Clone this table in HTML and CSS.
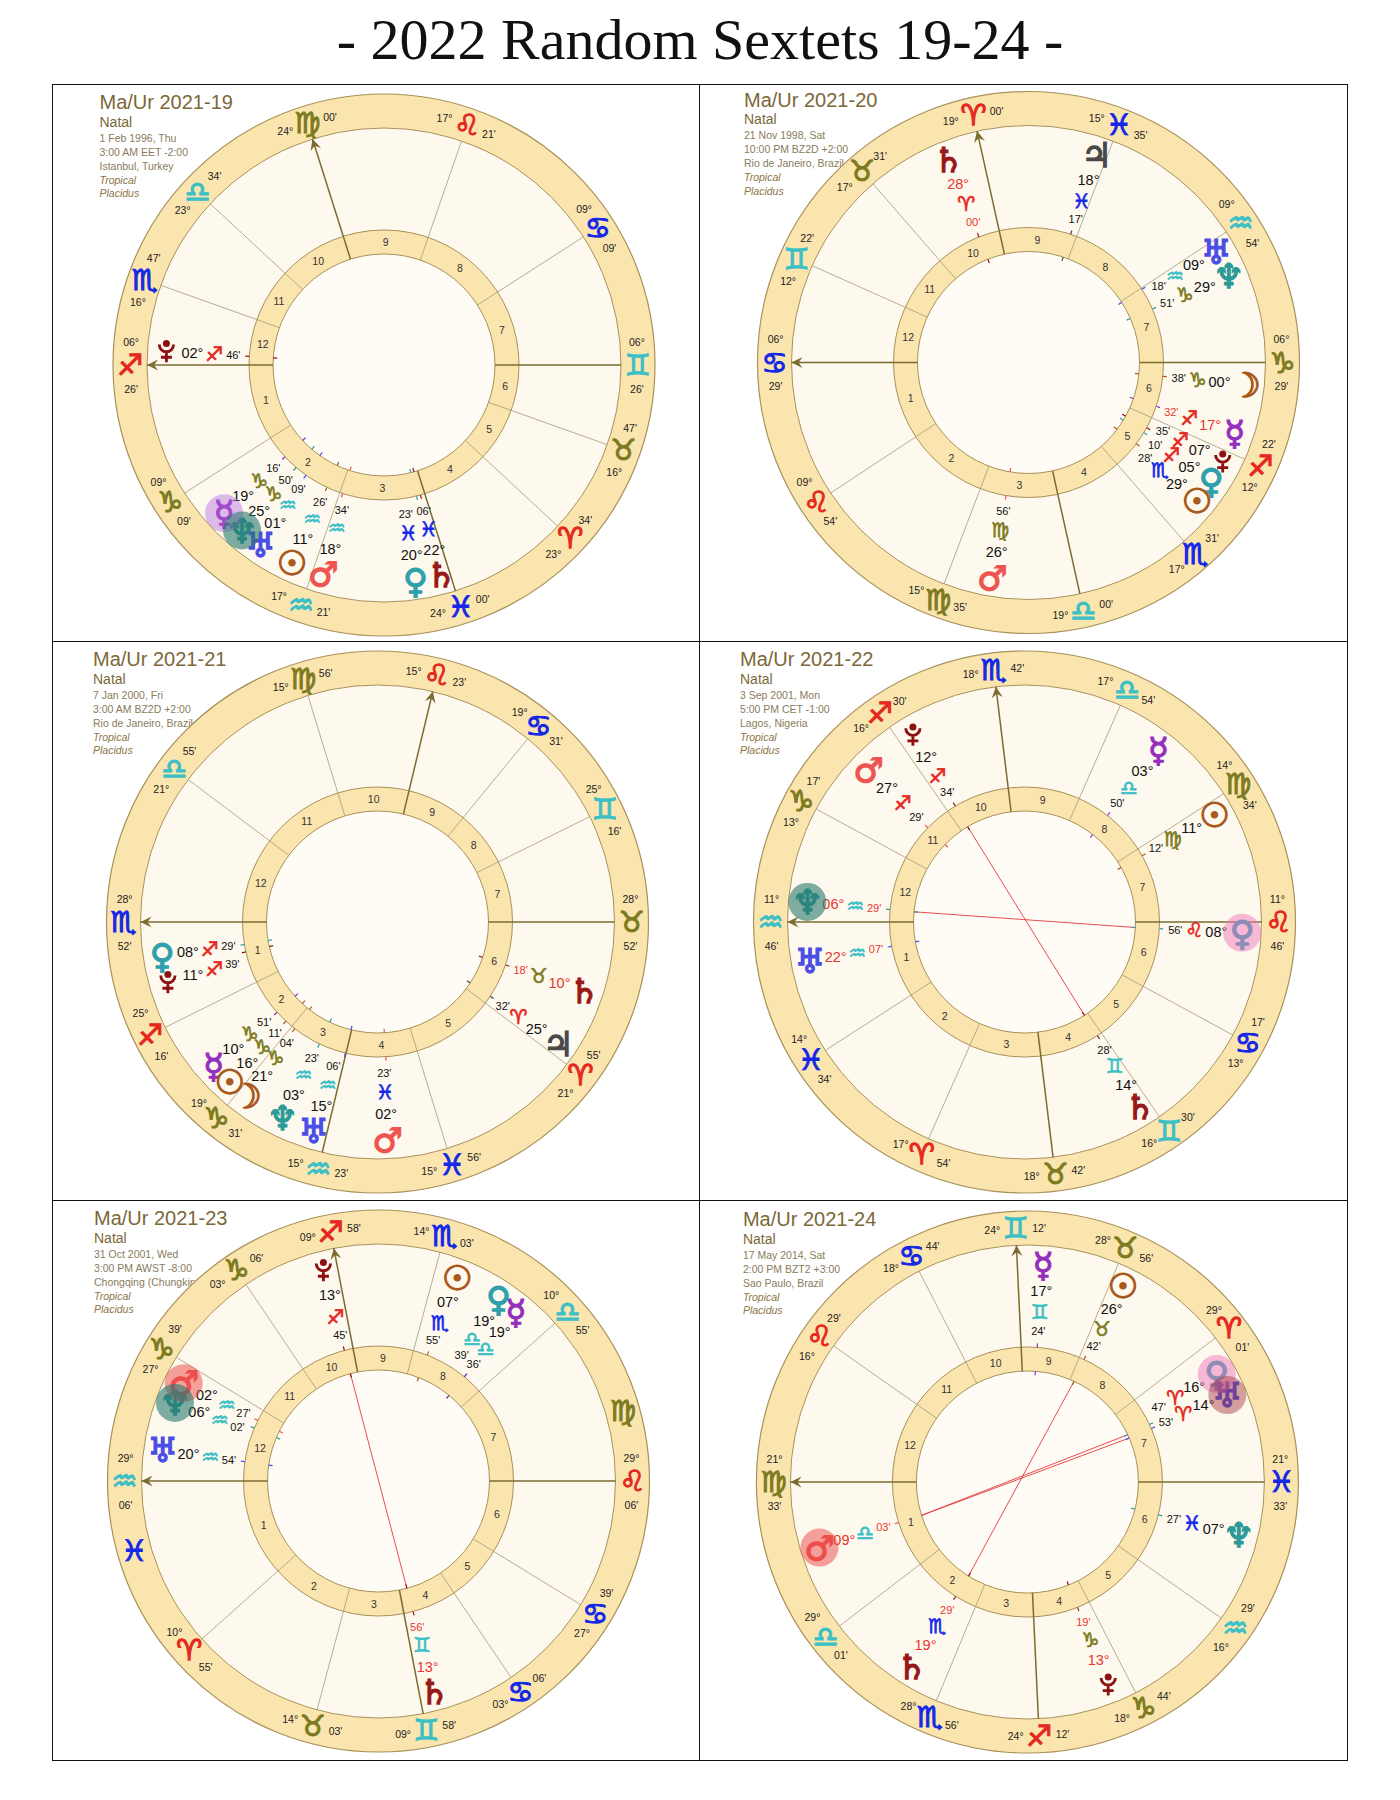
FILE: index.html
```html
<!DOCTYPE html>
<html lang="en">
<head>
<meta charset="utf-8">
<title>2022 Random Sextets 19-24</title>
<link rel="stylesheet" href="styles.css">
</head>
<body>
<h1 class="title">- 2022 Random Sextets 19-24 -</h1>
<main class="sheet">
  <section class="cell" data-chart="19"><svg class="wheel" xmlns="http://www.w3.org/2000/svg"></svg></section>
  <section class="cell" data-chart="20"><svg class="wheel" xmlns="http://www.w3.org/2000/svg"></svg></section>
  <section class="cell" data-chart="21"><svg class="wheel" xmlns="http://www.w3.org/2000/svg"></svg></section>
  <section class="cell" data-chart="22"><svg class="wheel" xmlns="http://www.w3.org/2000/svg"></svg></section>
  <section class="cell" data-chart="23"><svg class="wheel" xmlns="http://www.w3.org/2000/svg"></svg></section>
  <section class="cell" data-chart="24"><svg class="wheel" xmlns="http://www.w3.org/2000/svg"></svg></section>
</main>
<script src="script.js"></script>
</body>
</html>
```

FILE: styles.css
```css
html, body { margin: 0; padding: 0; background: #fff; }
body { width: 1400px; font-family: "Liberation Sans", Arial, sans-serif; }

.title {
  margin: 0;
  height: 84px;
  line-height: 80px;
  text-align: center;
  font-family: "Liberation Serif", "DejaVu Serif", serif;
  font-weight: normal;
  font-size: 58px;
  color: #111;
}

.sheet {
  box-sizing: border-box;
  margin-left: 52px;
  width: 1296px;
  height: 1677px;
  border: 1.5px solid #111;
  display: grid;
  grid-template-columns: 647px 1fr;
  grid-template-rows: 556.5px 559px 1fr;
}
.cell { position: relative; overflow: hidden; }
.cell:nth-child(odd) { border-right: 1px solid #111; }
.cell:nth-child(-n+4) { border-bottom: 1px solid #111; }
.wheel { display: block; width: 100%; height: 100%; }

/* header */
.hd-title { font-size: 20px; fill: #7b6838; }
.hd-natal { font-size: 14px; fill: #7b6838; }
.hd-line { font-size: 10.5px; fill: #8a7b5c; }
.hd-ital { font-size: 10.5px; font-style: italic; fill: #8c7446; }

/* wheel body */
.ring { fill: #fbe5ae; stroke: #a8915a; stroke-width: 1.2; }
.field { fill: #fef9ee; stroke: #a8915a; stroke-width: 1; }
.hring { fill: #fbe5ae; stroke: #a8915a; stroke-width: 1; }
.core { fill: #fffcf5; stroke: #a8915a; stroke-width: 1; }
.cusp { stroke: #a39a7a; stroke-width: 0.8; }
.axis { stroke: #7c6c30; stroke-width: 1.5; }
.arrow { fill: #7c6c30; stroke: none; }
.aspect { stroke: #e5393b; stroke-width: 0.9; }
.tk { stroke-width: 1.2; }

.c { text-anchor: middle; dominant-baseline: central; }
.hnum { font-size: 10.5px; fill: #333; }
.rlab { font-size: 10.5px; fill: #222; }
.zg { font-family: "DejaVu Sans", sans-serif; font-size: 29px; stroke-width: 1.1; }
.pg { font-family: "DejaVu Sans", sans-serif; font-size: 34px; stroke-width: 1.3; }
.pdeg { font-size: 14.5px; fill: #111; }
.pmin { font-size: 11px; fill: #111; }
.psg { font-family: "DejaVu Sans", sans-serif; font-size: 20px; stroke-width: 0.7; }
.retro { fill: #e8362f; }

/* sign element colours */
.s-fire { fill: #e5281e; stroke: #e5281e; }
.s-earth { fill: #7d7b21; stroke: #7d7b21; }
.s-air { fill: #3dbfc6; stroke: #3dbfc6; }
.s-water { fill: #1428e6; stroke: #1428e6; }

/* planet colours */
.p-sun { fill: #a8591b; stroke: #a8591b; }
.p-moon { fill: #a8591b; stroke: #a8591b; }
.p-mercury { fill: #9430bd; stroke: #9430bd; }
.p-venus { fill: #2fa1ad; stroke: #2fa1ad; }
.p-mars { fill: #ee5550; stroke: #ee5550; }
.p-jupiter { fill: #484848; stroke: #484848; }
.p-saturn { fill: #981818; stroke: #981818; }
.p-uranus { fill: #4a4ee6; stroke: #4a4ee6; }
.p-neptune { fill: #2c9a96; stroke: #2c9a96; }
.p-pluto { fill: #8c1212; stroke: #8c1212; }
.pl { fill: none; stroke-width: 2.6; }
.pl-dot { stroke: none; }

/* highlight discs */
.hl-purple { fill: rgba(180, 110, 225, 0.45); }
.hl-teal { fill: rgba(40, 120, 110, 0.6); }
.hl-pink { fill: rgba(240, 120, 190, 0.5); }
.hl-red { fill: rgba(235, 70, 70, 0.5); }
.hl-maroon { fill: rgba(160, 50, 60, 0.45); }
```

FILE: script.js
```js
(function () {
  var SIGNS = ['\u2648','\u2649','\u264A','\u264B','\u264C','\u264D','\u264E','\u264F','\u2650','\u2651','\u2652','\u2653'];
  var ELEM = ['fire', 'earth', 'air', 'water'];
  var PG = { sun: '\u2609', moon: '\u263D', mercury: '\u263F', venus: '\u2640', mars: '\u2642',
             jupiter: '\u2643', saturn: '\u2644', uranus: '\u2645', neptune: '\u2646' };
  var VS = '\uFE0E';
  var R_OUT = 271, R_ZIN = 237, R_HOUT = 135, R_HIN = 111, R_SIGN = 254, R_HNUM = 123;
  var R_PG = 218, R_PD = 192, R_PS = 170, R_PM = 151;

  var CHARTS = {
    '19': { cx: 384, cy: 365, title: 'Ma/Ur 2021-19',
      info: ['1 Feb 1996, Thu', '3:00 AM EET -2:00', 'Istanbul, Turkey'],
      cusps: [[8,6,26],[9,9,9],[10,17,21],[11,24,0],[0,23,34],[1,16,47]],
      planets: [
        ['pluto',8,2,46,{}],
        ['mercury',9,19,16,{hl:'purple'}],
        ['neptune',9,25,50,{hl:'teal'}],
        ['uranus',10,1,9,{disp:235.5}],
        ['sun',10,11,26,{}],
        ['mars',10,18,34,{disp:253.8}],
        ['venus',11,20,23,{disp:278.3}],
        ['saturn',11,22,6,{disp:285.2}]
      ], aspects: [] },
    '20': { cx: 1028.5, cy: 362.5, title: 'Ma/Ur 2021-20',
      info: ['21 Nov 1998, Sat', '10:00 PM BZ2D +2:00', 'Rio de Janeiro, Brazil'],
      cusps: [[3,6,29],[4,9,54],[5,15,35],[6,19,0],[7,17,31],[8,12,22]],
      planets: [
        ['saturn',0,28,0,{r:1}],
        ['jupiter',11,18,17,{}],
        ['uranus',10,9,18,{disp:30.5}],
        ['neptune',9,29,51,{disp:23.3}],
        ['moon',9,0,38,{}],
        ['mercury',8,17,32,{r:1}],
        ['pluto',8,7,35,{disp:333}],
        ['venus',8,5,10,{disp:327}],
        ['sun',7,29,28,{disp:320.6}],
        ['mars',5,26,56,{}]
      ], aspects: [] },
    '21': { cx: 377.5, cy: 921.5, title: 'Ma/Ur 2021-21',
      info: ['7 Jan 2000, Fri', '3:00 AM BZ2D +2:00', 'Rio de Janeiro, Brazil'],
      cusps: [[7,28,52],[8,25,16],[9,19,31],[10,15,23],[11,15,56],[0,21,55]],
      planets: [
        ['venus',8,8,29,{disp:189}],
        ['pluto',8,11,39,{disp:196}],
        ['mercury',9,10,51,{disp:221.3}],
        ['sun',9,16,11,{}],
        ['moon',9,21,4,{disp:233.1}],
        ['neptune',10,3,23,{disp:244.2}],
        ['uranus',10,15,6,{disp:253}],
        ['mars',11,2,23,{disp:272.6}],
        ['jupiter',0,25,32,{disp:326}],
        ['saturn',1,10,18,{r:1}]
      ], aspects: [] },
    '22': { cx: 1024.5, cy: 921.5, title: 'Ma/Ur 2021-22',
      info: ['3 Sep 2001, Mon', '5:00 PM CET -1:00', 'Lagos, Nigeria'],
      cusps: [[10,11,46],[11,14,34],[0,17,54],[1,18,42],[2,16,30],[3,13,17]],
      planets: [
        ['pluto',8,12,34,{}],
        ['mars',8,27,29,{}],
        ['mercury',6,3,50,{}],
        ['sun',5,11,12,{}],
        ['venus',4,8,56,{hl:'pink'}],
        ['saturn',2,14,28,{disp:302}],
        ['neptune',10,6,29,{r:1,hl:'teal'}],
        ['uranus',10,22,7,{r:1}]
      ], aspects: [['neptune','venus'],['pluto','saturn']] },
    '23': { cx: 378.5, cy: 1480.5, title: 'Ma/Ur 2021-23',
      info: ['31 Oct 2001, Wed', '3:00 PM AWST -8:00', 'Chongqing (Chungking), China'],
      cusps: [[10,29,6],[0,10,55],[1,14,3],[2,9,58],[3,3,6],[3,27,39]],
      planets: [
        ['pluto',8,13,45,{}],
        ['sun',7,7,55,{}],
        ['venus',6,19,39,{disp:56.6}],
        ['mercury',6,19,36,{disp:50.9}],
        ['mars',10,2,27,{hl:'red'}],
        ['neptune',10,6,2,{disp:159,hl:'teal'}],
        ['uranus',10,20,54,{}],
        ['saturn',2,13,56,{r:1}]
      ], aspects: [['pluto','saturn']] },
    '24': { cx: 1027.4, cy: 1481.5, title: 'Ma/Ur 2021-24',
      info: ['17 May 2014, Sat', '2:00 PM BZT2 +3:00', 'Sao Paulo, Brazil'],
      cusps: [[5,21,33],[6,29,1],[7,28,56],[8,24,12],[9,18,44],[10,16,29]],
      planets: [
        ['mercury',2,17,24,{}],
        ['sun',1,26,42,{disp:64}],
        ['venus',0,16,47,{disp:29.7,hl:'pink'}],
        ['uranus',0,14,53,{disp:23.5,hl:'maroon'}],
        ['neptune',11,7,27,{}],
        ['mars',6,9,3,{r:1,hl:'red'}],
        ['saturn',7,19,29,{r:1}],
        ['pluto',9,13,19,{r:1}]
      ], aspects: [['mars','venus'],['mars','uranus'],['saturn','sun']] }
  };

  function f(n) { return n.toFixed(1); }
  function pad(n) { return (n < 10 ? '0' : '') + n; }
  function lonOf(s, d, m) { return s * 30 + d + m / 60; }
  function norm(a) { return ((a % 360) + 360) % 360; }

  function draw(svg, c) {
    var box = svg.getBoundingClientRect();
    var cx = c.cx - box.left - window.pageXOffset;
    var cy = c.cy - box.top - window.pageYOffset;
    var ascL = lonOf(c.cusps[0][0], c.cusps[0][1], c.cusps[0][2]);
    function scr(L) { return norm(180 + L - ascL); }
    function P(R, a) { var t = a * Math.PI / 180; return [cx + R * Math.cos(t), cy - R * Math.sin(t)]; }
    function txt(cls, R, a, s) {
      var p = P(R, a);
      return '<text class="c ' + cls + '" x="' + f(p[0]) + '" y="' + f(p[1]) + '">' + s + '</text>';
    }
    function seg(cls, R1, R2, a) {
      var p = P(R1, a), q = P(R2, a);
      return '<line class="' + cls + '" x1="' + f(p[0]) + '" y1="' + f(p[1]) + '" x2="' + f(q[0]) + '" y2="' + f(q[1]) + '"/>';
    }
    function circ(cls, r) {
      return '<circle class="' + cls + '" cx="' + f(cx) + '" cy="' + f(cy) + '" r="' + r + '"/>';
    }

    var o = '';
    var hx = cx - 284.5, hy = cy - 256;
    o += '<text class="hd-title" x="' + f(hx) + '" y="' + f(hy) + '">' + c.title + '</text>';
    o += '<text class="hd-natal" x="' + f(hx) + '" y="' + f(hy + 17.5) + '">Natal</text>';
    o += '<text class="hd-line" x="' + f(hx) + '" y="' + f(hy + 32.5) + '">' + c.info[0] + '</text>';
    o += '<text class="hd-line" x="' + f(hx) + '" y="' + f(hy + 46.5) + '">' + c.info[1] + '</text>';
    o += '<text class="hd-line" x="' + f(hx) + '" y="' + f(hy + 60.5) + '">' + c.info[2] + '</text>';
    o += '<text class="hd-ital" x="' + f(hx) + '" y="' + f(hy + 74.5) + '">Tropical</text>';
    o += '<text class="hd-ital" x="' + f(hx) + '" y="' + f(hy + 88) + '">Placidus</text>';

    o += circ('ring', R_OUT) + circ('field', R_ZIN) + circ('hring', R_HOUT) + circ('core', R_HIN);

    var cusps = [], i;
    for (i = 0; i < 6; i++) {
      var k = c.cusps[i];
      cusps[i] = { s: k[0], d: k[1], m: k[2] };
      cusps[i + 6] = { s: (k[0] + 6) % 12, d: k[1], m: k[2] };
    }
    cusps.forEach(function (cu) { cu.a = scr(lonOf(cu.s, cu.d, cu.m)); });

    for (i = 0; i < 12; i++) {
      o += seg(i % 3 === 0 ? 'axis' : 'cusp', R_HIN, R_ZIN, cusps[i].a);
    }
    [0, 9].forEach(function (n) {
      var a = cusps[n].a;
      var t = P(R_ZIN, a), b1 = P(R_ZIN - 11, a + 1.4), m = P(R_ZIN - 7, a), b2 = P(R_ZIN - 11, a - 1.4);
      o += '<polygon class="arrow" points="' + [t, b1, m, b2].map(function (p) { return f(p[0]) + ',' + f(p[1]); }).join(' ') + '"/>';
    });

    var pos = {};
    c.planets.forEach(function (p) { pos[p[0]] = scr(lonOf(p[1], p[2], p[3])); });

    c.aspects.forEach(function (as) {
      var p = P(R_HIN, pos[as[0]]), q = P(R_HIN, pos[as[1]]);
      o += '<line class="aspect" x1="' + f(p[0]) + '" y1="' + f(p[1]) + '" x2="' + f(q[0]) + '" y2="' + f(q[1]) + '"/>';
    });

    for (i = 0; i < 12; i++) {
      var a1 = cusps[i].a, a2 = cusps[(i + 1) % 12].a;
      o += txt('hnum', R_HNUM, a1 + norm(a2 - a1) / 2, String(i + 1));
    }

    var present = {};
    for (i = 0; i < 12; i++) {
      var cu = cusps[i];
      present[cu.s] = true;
      var sgn = i < 6 ? -1 : 1;
      o += txt('zg s-' + ELEM[cu.s % 4], R_SIGN, cu.a, SIGNS[cu.s] + VS);
      o += txt('rlab', R_SIGN, cu.a + sgn * 5.3, pad(cu.d) + '\u00B0');
      o += txt('rlab', R_SIGN, cu.a - sgn * 5.3, pad(cu.m) + "'");
    }
    for (i = 0; i < 12; i++) {
      if (!present[i]) o += txt('zg s-' + ELEM[i % 4], R_SIGN, scr(i * 30 + 15), SIGNS[i] + VS);
    }

    c.planets.forEach(function (p) {
      var a = pos[p[0]];
      o += seg('tk p-' + p[0], R_HOUT, R_HOUT + 4, a);
      o += seg('tk p-' + p[0], R_HIN - 4, R_HIN, a);
    });

    var hls = '';
    c.planets.forEach(function (p) {
      var name = p[0], opt = p[4];
      var a = (opt.disp !== undefined) ? opt.disp : pos[name];
      var g = P(R_PG, a);
      if (name === 'pluto') {
        o += '<g class="p-pluto" transform="translate(' + f(g[0]) + ',' + f(g[1] - 1) + ') scale(1.1)">' +
             '<path class="pl" d="M-6.5,-5 A6.5,6.5 0 0 0 6.5,-5 M0,1.5 V11 M-5,6.5 H5"/>' +
             '<circle class="pl-dot" cx="0" cy="-6" r="3.2"/></g>';
      } else {
        o += txt('pg p-' + name, R_PG, a, PG[name] + VS);
      }
      var rc = opt.r ? ' retro' : '';
      o += txt('pdeg' + rc, R_PD, a, pad(p[2]) + '\u00B0');
      o += txt('psg s-' + ELEM[p[1] % 4], R_PS, a, SIGNS[p[1]] + VS);
      o += txt('pmin' + rc, R_PM, a, pad(p[3]) + "'");
      if (opt.hl) {
        hls += '<circle class="hl-' + opt.hl + '" cx="' + f(g[0]) + '" cy="' + f(g[1]) + '" r="19"/>';
      }
    });
    o += hls;

    svg.innerHTML = o;
  }

  var cells = document.querySelectorAll('.cell');
  for (var n = 0; n < cells.length; n++) {
    var id = cells[n].getAttribute('data-chart');
    var svg = cells[n].querySelector('svg');
    if (CHARTS[id]) draw(svg, CHARTS[id]);
  }
})();
```
